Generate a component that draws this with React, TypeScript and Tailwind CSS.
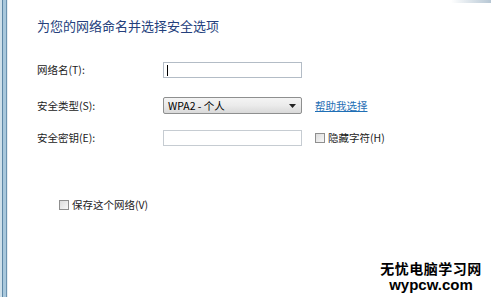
import React from "react";

const font = { fontFamily: '"Noto Sans CJK SC", "Liberation Sans", sans-serif' };

function Check({ className = "" }: { className?: string }) {
  return (
    <span
      className={
        "inline-block h-[10px] w-[10px] border border-[#8f8f8f] bg-gradient-to-br from-[#dcdcdc] to-[#f8f8f8] " +
        className
      }
    />
  );
}

export default function App() {
  return (
    <div
      className="relative flex h-[297px] w-[491px] overflow-hidden bg-white text-[#222]"
      style={font}
    >
      {/* left window frame */}
      <div className="flex h-full w-[8px] shrink-0">
        <div className="w-[2px] bg-[#cfe0ea]" />
        <div className="w-[1px] bg-[#5d87a6]" />
        <div className="w-[3px] bg-[#a9c8dc]" />
        <div className="w-[1px] bg-[#6c93b0]" />
        <div className="w-[1px] bg-[#e6eef3]" />
      </div>

      <div className="flex flex-1 flex-col">
        <div className="ml-auto h-[3px] w-[40px] bg-gradient-to-r from-white to-[#b7c7d4]" />
        <div className="pl-[29px]">
          <h1 className="mt-[14px] text-[13px] leading-[18px] text-[#24407c]">
            为您的网络命名并选择安全选项
          </h1>

          <div className="mt-[27px] grid grid-cols-[126px_139px_1fr] items-center text-[10.5px]">
            <span>网络名(T):</span>
            <div className="flex h-[16px] items-center border border-[#b3bcc6] bg-white pl-[3px]">
              <span className="h-[11px] w-[1px] bg-black" />
            </div>
            <span />

            <span className="mt-[19px]">安全类型(S):</span>
            <div className="mt-[19px] flex h-[17px] items-center justify-between rounded-[2px] border border-[#8e8f8f] bg-gradient-to-b from-[#f4f4f4] via-[#ebebeb] to-[#d9d9d9] pl-[4px] pr-[5px]">
              <span className="text-[10.5px] text-black">WPA2 - 个人</span>
              <svg width="7" height="4" viewBox="0 0 7 4">
                <path d="M0 0h7L3.5 4z" fill="#222" />
              </svg>
            </div>
            <a className="mt-[19px] ml-[13px] text-[10.5px] text-[#1f6fb5] underline">帮助我选择</a>

            <span className="mt-[16px]">安全密钥(E):</span>
            <div className="mt-[16px] h-[16px] border border-[#c6ccd2] bg-white" />
            <div className="mt-[16px] ml-[13px] flex items-center gap-[3px]">
              <Check />
              <span>隐藏字符(H)</span>
            </div>
          </div>

          <div className="mt-[51px] ml-[22px] flex items-center gap-[3px] text-[10.5px]">
            <Check />
            <span>保存这个网络(V)</span>
          </div>
        </div>
      </div>

      {/* watermark */}
      <div className="absolute left-[378px] top-[259px] flex w-[106px] flex-col items-center whitespace-nowrap text-black">
        <span className="text-[14px] font-bold leading-[18px] tracking-[0.5px]">无忧电脑学习网</span>
        <span
          className="text-[15px] font-bold leading-[16px]"
          style={{ fontFamily: '"Liberation Sans", Arial, sans-serif' }}
        >
          wypcw.com
        </span>
      </div>
    </div>
  );
}
